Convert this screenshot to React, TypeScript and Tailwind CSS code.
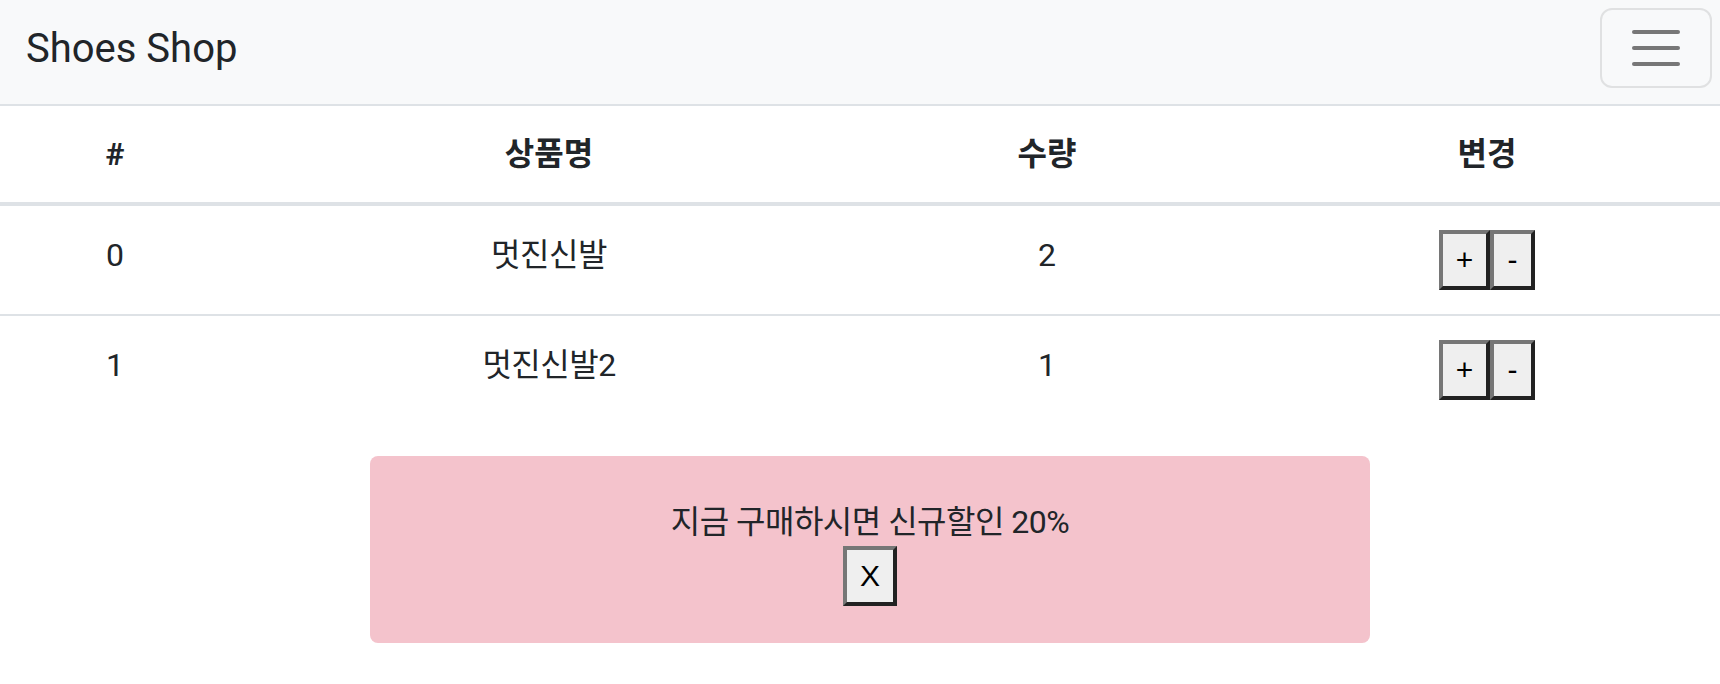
const rows = [
  { id: 0, name: "멋진신발", count: 2 },
  { id: 1, name: "멋진신발2", count: 1 },
];

const Btn = ({ label, w }: { label: string; w: string }) => {
  return (
    <button
      className={`${w} h-[60px] bg-[#efefef] border-4 border-t-[#767676] border-l-[#767676] border-r-[#222] border-b-[#222] font-['Liberation_Sans',Arial,sans-serif] font-normal text-[30px] leading-none text-black flex items-center justify-center`}
    >
      {label}
    </button>
  );
};

const Navbar = () => {
  return (
    <nav className="h-[106px] bg-[#f8f9fa] border-b-2 border-[#dee2e6] flex items-start justify-between pt-2 pl-[26px] pr-[8px]">
      <div className="h-[80px] flex items-center text-[40px] pt-[2px]">Shoes Shop</div>
      <button className="w-[112px] h-[80px] border-2 border-[#e0e1e2] rounded-[12px] flex flex-col items-center justify-center gap-[12px]">
        <span className="w-[48px] h-[4px] rounded-full bg-[#777]" />
        <span className="w-[48px] h-[4px] rounded-full bg-[#777]" />
        <span className="w-[48px] h-[4px] rounded-full bg-[#777]" />
      </button>
    </nav>
  );
};

const Cart = () => {
  return (
    <div>
      <div className="grid grid-cols-[230px_638px_358px_1fr] h-[100px] border-b-4 border-[#dee2e6] font-bold">
        <div className="flex items-center justify-center">#</div>
        <div className="flex items-center justify-center">상품명</div>
        <div className="flex items-center justify-center">수량</div>
        <div className="flex items-center justify-center pl-[28px]">변경</div>
      </div>
      {rows.map((r, i) => (
        <div
          key={r.id}
          className={
            i === 0
              ? "grid grid-cols-[230px_638px_358px_1fr] h-[110px] border-b-2 border-[#dee2e6]"
              : "grid grid-cols-[230px_638px_358px_1fr] h-[108px]"
          }
        >
          <div className="flex items-center justify-center pb-[10px]">{r.id}</div>
          <div className="flex items-center justify-center pb-[10px] tracking-[-0.5px]">{r.name}</div>
          <div className="flex items-center justify-center pb-[10px]">{r.count}</div>
          <div className="flex items-center justify-center pl-[28px]">
            <Btn label="+" w="w-[51px]" />
            <Btn label="-" w="w-[45px]" />
          </div>
        </div>
      ))}
    </div>
  );
};

const App = () => {
  return (
    <div className="min-h-screen bg-white text-[#212529] text-[32px] font-[Roboto,'Noto_Sans_CJK_KR',sans-serif]">
      <Navbar />
      <Cart />
      <div className="mt-[32px] ml-[370px] w-[1000px] h-[187px] bg-[#f4c3cc] rounded-[8px] flex flex-col items-center pt-[40px]">
        <p className="leading-[48px] tracking-[-0.5px] pt-[2px]">지금 구매하시면 신규할인 20%</p>
        <Btn label="X" w="w-[54px]" />
      </div>
    </div>
  );
};

export default App;
